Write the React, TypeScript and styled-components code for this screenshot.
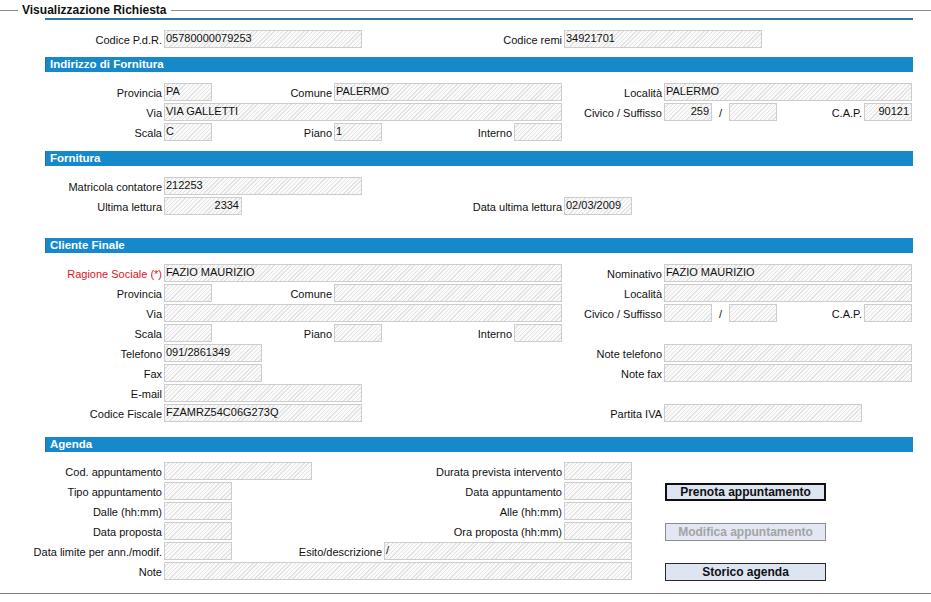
import React from "react";
import styled, { createGlobalStyle, css } from "styled-components";

const GlobalStyle = createGlobalStyle`
  html, body { margin: 0; padding: 0; background: #ffffff; }
  body { font-family: "Liberation Sans", Arial, sans-serif; font-size: 11px; color: #111; }
`;

const XS = [45, 162, 164, 212, 232, 242, 262, 312, 332, 334, 362, 382, 384, 512, 514, 562, 564, 632, 662, 664, 712, 729, 762, 777, 826, 862, 864, 912, 913];
const COLS = XS.slice(1).map((x, i) => `${x - XS[i]}px`).join(" ");
const span = (a: number, b: number) => `${XS.indexOf(a) + 1} / ${XS.indexOf(b) + 1}`;

const Frame = styled.div`
  width: 931px;
  border-bottom: 1px solid #7f7f7f;
  box-shadow: 0 1px 0 #c4c4c4;
  padding-bottom: 11px;
`;

const TitleBar = styled.div`
  display: flex;
  align-items: flex-start;
  height: 18px;
`;

const TitleLine = styled.div<{ $grow?: boolean }>`
  height: 1px;
  margin-top: 10px;
  background: #8a8a8a;
  ${(p) => (p.$grow ? css`flex: 1;` : css`width: 18px;`)}
`;

const Title = styled.div`
  margin-top: 3px;
  padding: 0 4px;
  font-size: 12px;
  line-height: 14px;
  font-weight: bold;
  color: #111;
`;

const Content = styled.div`
  margin-left: 45px;
  width: 868px;
`;

const Rule = styled.div`
  height: 2px;
  background: #2d78a2;
  margin-bottom: 10px;
`;

const SectionHeader = styled.div<{ $top: number; $bottom?: number }>`
  margin-top: ${(p) => p.$top}px;
  margin-bottom: ${(p) => p.$bottom ?? 11}px;
  height: 15px;
  line-height: 15px;
  background: #1689ca;
  border-left: 1px solid #2a6f98;
  color: #ffffff;
  font-weight: bold;
  font-size: 11.5px;
  padding-left: 4px;
`;

const Row = styled.div`
  display: grid;
  grid-template-columns: ${COLS};
  height: 18px;
  margin-bottom: 2px;
`;

const LabelCell = styled.div<{ $col: string; $red?: boolean }>`
  grid-column: ${(p) => p.$col};
  grid-row: 1;
  display: flex;
  justify-content: flex-end;
  align-items: center;
  white-space: nowrap;
  font-size: 11px;
  color: ${(p) => (p.$red ? "#e0141e" : "#111")};
  padding-top: 1px;
`;

const SlashCell = styled.div<{ $col: string }>`
  grid-column: ${(p) => p.$col};
  grid-row: 1;
  display: flex;
  justify-content: center;
  align-items: center;
  font-size: 11px;
  padding-top: 1px;
`;

const FieldBox = styled.div<{ $col: string; $right?: boolean }>`
  grid-column: ${(p) => p.$col};
  grid-row: 1;
  box-sizing: border-box;
  height: 18px;
  border: 1px solid #cdcdcd;
  background-color: #fafafa;
  background-image: repeating-linear-gradient(135deg, transparent 0px, transparent 2px, #e3e3e3 2px, #e3e3e3 3px);
  font-size: 11px;
  line-height: 14px;
  padding: 0 2px 0 1px;
  color: #111;
  white-space: nowrap;
  overflow: hidden;
  text-align: ${(p) => (p.$right ? "right" : "left")};
`;

const ActionButton = styled.button<{ $col: string; $variant: "primary" | "disabled" | "normal" }>`
  grid-column: ${(p) => p.$col};
  grid-row: 1;
  margin-left: 1px;
  margin-top: 1px;
  height: 18px;
  box-sizing: border-box;
  font-family: "Liberation Sans", Arial, sans-serif;
  font-size: 12px;
  font-weight: bold;
  padding: 0;
  background: #dde4f2;
  color: #111;
  border: 1px solid #2a2a2a;
  ${(p) =>
    p.$variant === "primary" &&
    css`
      border: 2px solid #111;
    `}
  ${(p) =>
    p.$variant === "disabled" &&
    css`
      border: 1px solid #8c8c8c;
      background: #e2e7f3;
      color: #a4a4a4;
    `}
`;

const L = ({ a, b, children, red }: { a: number; b: number; children: React.ReactNode; red?: boolean }) => (
  <LabelCell $col={span(a, b)} $red={red}>
    {children}
  </LabelCell>
);

const F = ({ a, b, v, right }: { a: number; b: number; v?: string; right?: boolean }) => (
  <FieldBox $col={span(a, b)} $right={right}>
    {v}
  </FieldBox>
);

const Slash = () => <SlashCell $col={span(712, 729)}>/</SlashCell>;

export default function App() {
  return (
    <>
      <GlobalStyle />
      <Frame>
        <TitleBar>
          <TitleLine />
          <Title>Visualizzazione Richiesta</Title>
          <TitleLine $grow />
        </TitleBar>
        <Content>
          <Rule />
          <Row>
            <L a={45} b={162}>Codice P.d.R.</L>
            <F a={164} b={362} v="05780000079253" />
            <L a={362} b={562}>Codice remi</L>
            <F a={564} b={762} v="34921701" />
          </Row>

          <SectionHeader $top={9}>Indirizzo di Fornitura</SectionHeader>
          <Row>
            <L a={45} b={162}>Provincia</L>
            <F a={164} b={212} v="PA" />
            <L a={212} b={332}>Comune</L>
            <F a={334} b={562} v="PALERMO" />
            <L a={562} b={662}>Località</L>
            <F a={664} b={912} v="PALERMO" />
          </Row>
          <Row>
            <L a={45} b={162}>Via</L>
            <F a={164} b={562} v="VIA GALLETTI" />
            <L a={562} b={662}>Civico / Suffisso</L>
            <F a={664} b={712} v="259" right />
            <Slash />
            <F a={729} b={777} />
            <L a={777} b={862}>C.A.P.</L>
            <F a={864} b={912} v="90121" right />
          </Row>
          <Row>
            <L a={45} b={162}>Scala</L>
            <F a={164} b={212} v="C" />
            <L a={212} b={332}>Piano</L>
            <F a={334} b={382} v="1" />
            <L a={382} b={512}>Interno</L>
            <F a={514} b={562} />
          </Row>

          <SectionHeader $top={10}>Fornitura</SectionHeader>
          <Row>
            <L a={45} b={162}>Matricola contatore</L>
            <F a={164} b={362} v="212253" />
          </Row>
          <Row>
            <L a={45} b={162}>Ultima lettura</L>
            <F a={164} b={242} v="2334" right />
            <L a={242} b={562}>Data ultima lettura</L>
            <F a={564} b={632} v="02/03/2009" />
          </Row>

          <SectionHeader $top={23}>Cliente Finale</SectionHeader>
          <Row>
            <L a={45} b={162} red>Ragione Sociale (*)</L>
            <F a={164} b={562} v="FAZIO MAURIZIO" />
            <L a={562} b={662}>Nominativo</L>
            <F a={664} b={912} v="FAZIO MAURIZIO" />
          </Row>
          <Row>
            <L a={45} b={162}>Provincia</L>
            <F a={164} b={212} />
            <L a={212} b={332}>Comune</L>
            <F a={334} b={562} />
            <L a={562} b={662}>Località</L>
            <F a={664} b={912} />
          </Row>
          <Row>
            <L a={45} b={162}>Via</L>
            <F a={164} b={562} />
            <L a={562} b={662}>Civico / Suffisso</L>
            <F a={664} b={712} />
            <Slash />
            <F a={729} b={777} />
            <L a={777} b={862}>C.A.P.</L>
            <F a={864} b={912} />
          </Row>
          <Row>
            <L a={45} b={162}>Scala</L>
            <F a={164} b={212} />
            <L a={212} b={332}>Piano</L>
            <F a={334} b={382} />
            <L a={382} b={512}>Interno</L>
            <F a={514} b={562} />
          </Row>
          <Row>
            <L a={45} b={162}>Telefono</L>
            <F a={164} b={262} v="091/2861349" />
            <L a={262} b={662}>Note telefono</L>
            <F a={664} b={912} />
          </Row>
          <Row>
            <L a={45} b={162}>Fax</L>
            <F a={164} b={262} />
            <L a={262} b={662}>Note fax</L>
            <F a={664} b={912} />
          </Row>
          <Row>
            <L a={45} b={162}>E-mail</L>
            <F a={164} b={362} />
          </Row>
          <Row>
            <L a={45} b={162}>Codice Fiscale</L>
            <F a={164} b={362} v="FZAMRZ54C06G273Q" />
            <L a={362} b={662}>Partita IVA</L>
            <F a={664} b={862} />
          </Row>

          <SectionHeader $top={15} $bottom={10}>Agenda</SectionHeader>
          <Row>
            <L a={45} b={162}>Cod. appuntamento</L>
            <F a={164} b={312} />
            <L a={312} b={562}>Durata prevista intervento</L>
            <F a={564} b={632} />
          </Row>
          <Row>
            <L a={45} b={162}>Tipo appuntamento</L>
            <F a={164} b={232} />
            <L a={232} b={562}>Data appuntamento</L>
            <F a={564} b={632} />
            <ActionButton $col={span(664, 826)} $variant="primary">Prenota appuntamento</ActionButton>
          </Row>
          <Row>
            <L a={45} b={162}>Dalle (hh:mm)</L>
            <F a={164} b={232} />
            <L a={232} b={562}>Alle (hh:mm)</L>
            <F a={564} b={632} />
          </Row>
          <Row>
            <L a={45} b={162}>Data proposta</L>
            <F a={164} b={232} />
            <L a={232} b={562}>Ora proposta (hh:mm)</L>
            <F a={564} b={632} />
            <ActionButton $col={span(664, 826)} $variant="disabled" disabled>Modifica appuntamento</ActionButton>
          </Row>
          <Row>
            <L a={45} b={162}>Data limite per ann./modif.</L>
            <F a={164} b={232} />
            <L a={232} b={382}>Esito/descrizione</L>
            <F a={384} b={632} v="/" />
          </Row>
          <Row>
            <L a={45} b={162}>Note</L>
            <F a={164} b={632} />
            <ActionButton $col={span(664, 826)} $variant="normal">Storico agenda</ActionButton>
          </Row>
        </Content>
      </Frame>
    </>
  );
}
